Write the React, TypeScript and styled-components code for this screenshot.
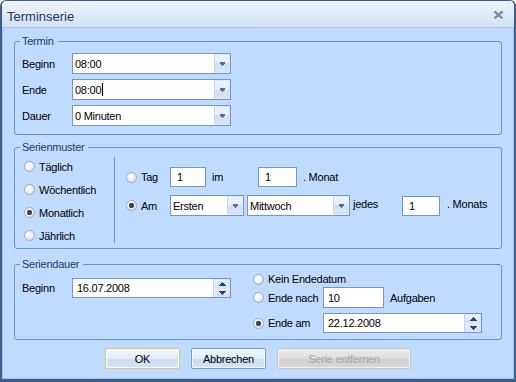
import React from 'react'
import styled, { createGlobalStyle } from 'styled-components'

const GlobalStyle = createGlobalStyle`
  html, body {
    margin: 0;
    padding: 0;
    background: #fff;
  }
  body {
    font-family: "Liberation Sans", Arial, sans-serif;
    font-size: 11px;
    letter-spacing: -0.25px;
    color: #000;
  }
  * {
    box-sizing: border-box;
  }
`

const Window = styled.div`
  width: 516px;
  height: 382px;
  display: flex;
  flex-direction: column;
  border-style: solid;
  border-color: #3d5e8a;
  border-width: 1px 2px 3px 2px;
  border-radius: 6px 6px 0 0;
  background: #bfdbff;
  overflow: hidden;
`

const TitleBar = styled.div`
  height: 26px;
  flex: none;
  display: flex;
  align-items: center;
  justify-content: space-between;
  padding: 5px 10px 0 5px;
  background: linear-gradient(#eef4fc, #dfe9f6 55%, #d2e0f3);
`

const Title = styled.span`
  font-size: 13px;
  letter-spacing: 0;
  color: #1e395b;
`

const CloseIcon = styled.svg`
  margin-bottom: 3px;
`

const Body = styled.div`
  flex: 1;
  display: flex;
  flex-direction: column;
  padding: 8px 12px 0;
  box-shadow: inset 0 0 0 1px #a9c4ea;
`

const Group = styled.fieldset<{ $pad: string; $mt?: number }>`
  margin: ${(p) => p.$mt ?? 0}px 0 0;
  padding: ${(p) => p.$pad};
  border: 1px solid #6b94cc;
  border-radius: 3px;
  min-width: 0;
`

const Caption = styled.legend`
  padding: 0 4px 0 2px;
  margin-left: -2px;
  font-size: 11px;
  line-height: 13px;
  color: #1e3a6a;
`

const FieldRow = styled.div<{ $h: number }>`
  display: flex;
  align-items: center;
  height: ${(p) => p.$h}px;
  & + & {
    margin-top: 5px;
  }
`

const FieldLabel = styled.span<{ $w: number }>`
  flex: none;
  width: ${(p) => p.$w}px;
`

const Word = styled.span<{ $w?: number; $ml?: number; $up?: number }>`
  flex: none;
  white-space: nowrap;
  width: ${(p) => (p.$w ? `${p.$w}px` : 'auto')};
  margin-left: ${(p) => p.$ml ?? 0}px;
  margin-bottom: ${(p) => (p.$up ?? 0) * 2}px;
`

const Field = styled.div<{ $w: number; $h: number; $ml?: number }>`
  flex: none;
  display: flex;
  width: ${(p) => p.$w}px;
  height: ${(p) => p.$h}px;
  margin-left: ${(p) => p.$ml ?? 0}px;
  border: 1px solid #7397cd;
  background: #fff;
`

const FieldText = styled.span<{ $pl?: number }>`
  flex: 1;
  display: flex;
  align-items: center;
  padding-left: ${(p) => p.$pl ?? 3}px;
  white-space: nowrap;
  overflow: hidden;
`

const Caret = styled.span`
  width: 1px;
  height: 13px;
  margin-left: 1px;
  background: #000;
`

const DropButton = styled.span`
  flex: none;
  width: 16px;
  display: flex;
  align-items: center;
  justify-content: center;
  border: 1px solid #dde8f8;
  border-left-color: #c3d5ee;
  background: linear-gradient(#edf3fc 0, #e6eefa 50%, #d0def3 50%, #d8e5f6 100%);
`

const SpinBox = styled.span`
  flex: none;
  width: 17px;
  display: flex;
  flex-direction: column;
  border-left: 1px solid #c3d5ee;
`

const SpinHalf = styled.span`
  flex: 1;
  display: flex;
  align-items: center;
  justify-content: center;
  border: 1px solid #dbe7f7;
  background: linear-gradient(#edf3fc, #d3e1f4);
`

const RadioItem = styled.label<{ $h: number; $w?: number }>`
  flex: none;
  display: flex;
  align-items: center;
  height: ${(p) => p.$h}px;
  width: ${(p) => (p.$w ? `${p.$w}px` : 'auto')};
  white-space: nowrap;
`

const RadioDot = styled.span<{ $on?: boolean }>`
  flex: none;
  width: 11px;
  height: 11px;
  margin-right: 4px;
  border-radius: 50%;
  border: 1px solid #a3abb6;
  background: ${(p) =>
    p.$on
      ? 'radial-gradient(circle, #3b4450 0 2px, #6d7580 2.6px, transparent 3px), '
      : ''}radial-gradient(circle at 40% 35%, #ffffff, #e9ecf0 55%, #c7ced7);
`

const PatternBody = styled.div`
  display: flex;
`

const RadioColumn = styled.div`
  width: 92px;
  padding-left: 2px;
  display: flex;
  flex-direction: column;
`

const Divider = styled.div`
  width: 1px;
  margin: 2px 0 4px;
  background: #7393c2;
`

const PatternDetail = styled.div`
  display: flex;
  flex-direction: column;
  gap: 8px;
  padding: 12px 0 0 11px;
`

const DetailRow = styled.div<{ $h: number }>`
  display: flex;
  align-items: center;
  height: ${(p) => p.$h}px;
`

const DurationBody = styled.div`
  display: grid;
  grid-template-columns: 231px 1fr;
`

const DurationStart = styled.div`
  padding-top: 6px;
`

const EndOptions = styled.div`
  display: flex;
  flex-direction: column;
`

const OptionRow = styled.div<{ $h: number; $mt: number }>`
  display: flex;
  align-items: center;
  height: ${(p) => p.$h}px;
  margin-top: ${(p) => p.$mt}px;
`

const ButtonBar = styled.div`
  display: flex;
  justify-content: center;
  gap: 11px;
  margin-top: 8px;
`

const Button = styled.button<{ $w: number; $kind: 'default' | 'normal' | 'disabled' }>`
  width: ${(p) => p.$w}px;
  height: 21px;
  padding: 0;
  font-family: inherit;
  font-size: 11px;
  letter-spacing: -0.25px;
  border-radius: 2px;
  border: 1px solid
    ${(p) => (p.$kind === 'default' ? '#e2c57a' : p.$kind === 'normal' ? '#7b9bca' : '#c6c6c6')};
  color: ${(p) => (p.$kind === 'disabled' ? '#a3a3a3' : '#000')};
  background: ${(p) =>
    p.$kind === 'disabled'
      ? 'linear-gradient(#ececec, #dcdcdc 50%, #d0d0d0 51%, #d8d8d8)'
      : 'linear-gradient(#f2f7fe, #e1ebf9 50%, #cadbf3 51%, #d6e4f6)'};
  box-shadow: inset 0 0 0 1px ${(p) => (p.$kind === 'disabled' ? '#efefef' : '#f4f8fe')};
`

const ArrowDown = () => (
  <svg width="5" height="4" viewBox="0 0 5 4" shapeRendering="crispEdges">
    <path d="M0 0h5v1H0z M0 1h5v1H0z M1 2h3v1H1z M2 3h1v1H2z" fill="#4a6ea6" />
  </svg>
)

const SpinArrow = ({ up }: { up?: boolean }) => (
  <svg width="7" height="4" viewBox="0 0 7 4" shapeRendering="crispEdges">
    <path
      d={up ? 'M3 0h1v1H3z M2 1h3v1H2z M1 2h5v1H1z M0 3h7v1H0z' : 'M0 0h7v1H0z M1 1h5v1H1z M2 2h3v1H2z M3 3h1v1H3z'}
      fill="#1f437c"
    />
  </svg>
)

const ComboBox = ({ w, h, value, caret, ml }: { w: number; h: number; value: string; caret?: boolean; ml?: number }) => (
  <Field $w={w} $h={h} $ml={ml}>
    <FieldText $pl={2}>
      {value}
      {caret && <Caret />}
    </FieldText>
    <DropButton>
      <ArrowDown />
    </DropButton>
  </Field>
)

const SpinEdit = ({ w, h, value }: { w: number; h: number; value: string }) => (
  <Field $w={w} $h={h}>
    <FieldText $pl={4}>{value}</FieldText>
    <SpinBox>
      <SpinHalf>
        <SpinArrow up />
      </SpinHalf>
      <SpinHalf>
        <SpinArrow />
      </SpinHalf>
    </SpinBox>
  </Field>
)

const Radio = ({ label, on, h, w }: { label: string; on?: boolean; h: number; w?: number }) => (
  <RadioItem $h={h} $w={w}>
    <RadioDot $on={on} />
    {label}
  </RadioItem>
)

const timeRows = [
  { label: 'Beginn', value: '08:00' },
  { label: 'Ende', value: '08:00', caret: true },
  { label: 'Dauer', value: '0 Minuten' },
]

const patterns = [
  { label: 'Täglich' },
  { label: 'Wöchentlich' },
  { label: 'Monatlich', on: true },
  { label: 'Jährlich' },
]

export default function App() {
  return (
    <>
      <GlobalStyle />
      <Window>
        <TitleBar>
          <Title>Terminserie</Title>
          <CloseIcon width="11" height="10" viewBox="0 0 11 10">
            <path d="M1.5 1.5l8 7M9.5 1.5l-8 7" stroke="#fff" strokeWidth="2.6" transform="translate(0 0.8)" />
            <path d="M1.5 1.5l8 7M9.5 1.5l-8 7" stroke="#7c8ea8" strokeWidth="2.4" />
          </CloseIcon>
        </TitleBar>
        <Body>
          <Group $pad="5px 0 8px 7px">
            <Caption>Termin</Caption>
            {timeRows.map((row) => (
              <FieldRow $h={21} key={row.label}>
                <FieldLabel $w={50}>{row.label}</FieldLabel>
                <ComboBox w={159} h={21} value={row.value} caret={row.caret} />
              </FieldRow>
            ))}
          </Group>

          <Group $pad="1px 0 1px 7px" $mt={6}>
            <Caption>Serienmuster</Caption>
            <PatternBody>
              <RadioColumn>
                {patterns.map((p) => (
                  <Radio key={p.label} label={p.label} on={p.on} h={23} />
                ))}
              </RadioColumn>
              <Divider />
              <PatternDetail>
                <DetailRow $h={20}>
                  <Radio label="Tag" h={20} w={44} />
                  <Field $w={36} $h={20}>
                    <FieldText $pl={6}>1</FieldText>
                  </Field>
                  <Word $w={46} $ml={6}>im</Word>
                  <Field $w={39} $h={20}>
                    <FieldText $pl={6}>1</FieldText>
                  </Field>
                  <Word $ml={6}>. Monat</Word>
                </DetailRow>
                <DetailRow $h={21}>
                  <Radio label="Am" on h={21} w={44} />
                  <ComboBox w={74} h={21} value="Ersten" />
                  <ComboBox w={103} h={21} value="Mittwoch" ml={3} />
                  <Word $w={49} $ml={3} $up={2}>jedes</Word>
                  <Field $w={38} $h={20}>
                    <FieldText $pl={6}>1</FieldText>
                  </Field>
                  <Word $ml={7} $up={2}>. Monats</Word>
                </DetailRow>
              </PatternDetail>
            </PatternBody>
          </Group>

          <Group $pad="1px 0 6px 7px" $mt={9}>
            <Caption>Seriendauer</Caption>
            <DurationBody>
              <DurationStart>
                <FieldRow $h={20}>
                  <FieldLabel $w={50}>Beginn</FieldLabel>
                  <SpinEdit w={159} h={20} value="16.07.2008" />
                </FieldRow>
              </DurationStart>
              <EndOptions>
                <Radio label="Kein Endedatum" h={14} />
                <OptionRow $h={21} $mt={1}>
                  <Radio label="Ende nach" h={21} w={70} />
                  <Field $w={61} $h={21}>
                    <FieldText $pl={4}>10</FieldText>
                  </Field>
                  <Word $ml={6}>Aufgaben</Word>
                </OptionRow>
                <OptionRow $h={20} $mt={5}>
                  <Radio label="Ende am" on h={20} w={70} />
                  <SpinEdit w={159} h={20} value="22.12.2008" />
                </OptionRow>
              </EndOptions>
            </DurationBody>
          </Group>

          <ButtonBar>
            <Button $w={75} $kind="default">OK</Button>
            <Button $w={75} $kind="normal">Abbrechen</Button>
            <Button $w={134} $kind="disabled" disabled>
              Serie entfernen
            </Button>
          </ButtonBar>
        </Body>
      </Window>
    </>
  )
}
